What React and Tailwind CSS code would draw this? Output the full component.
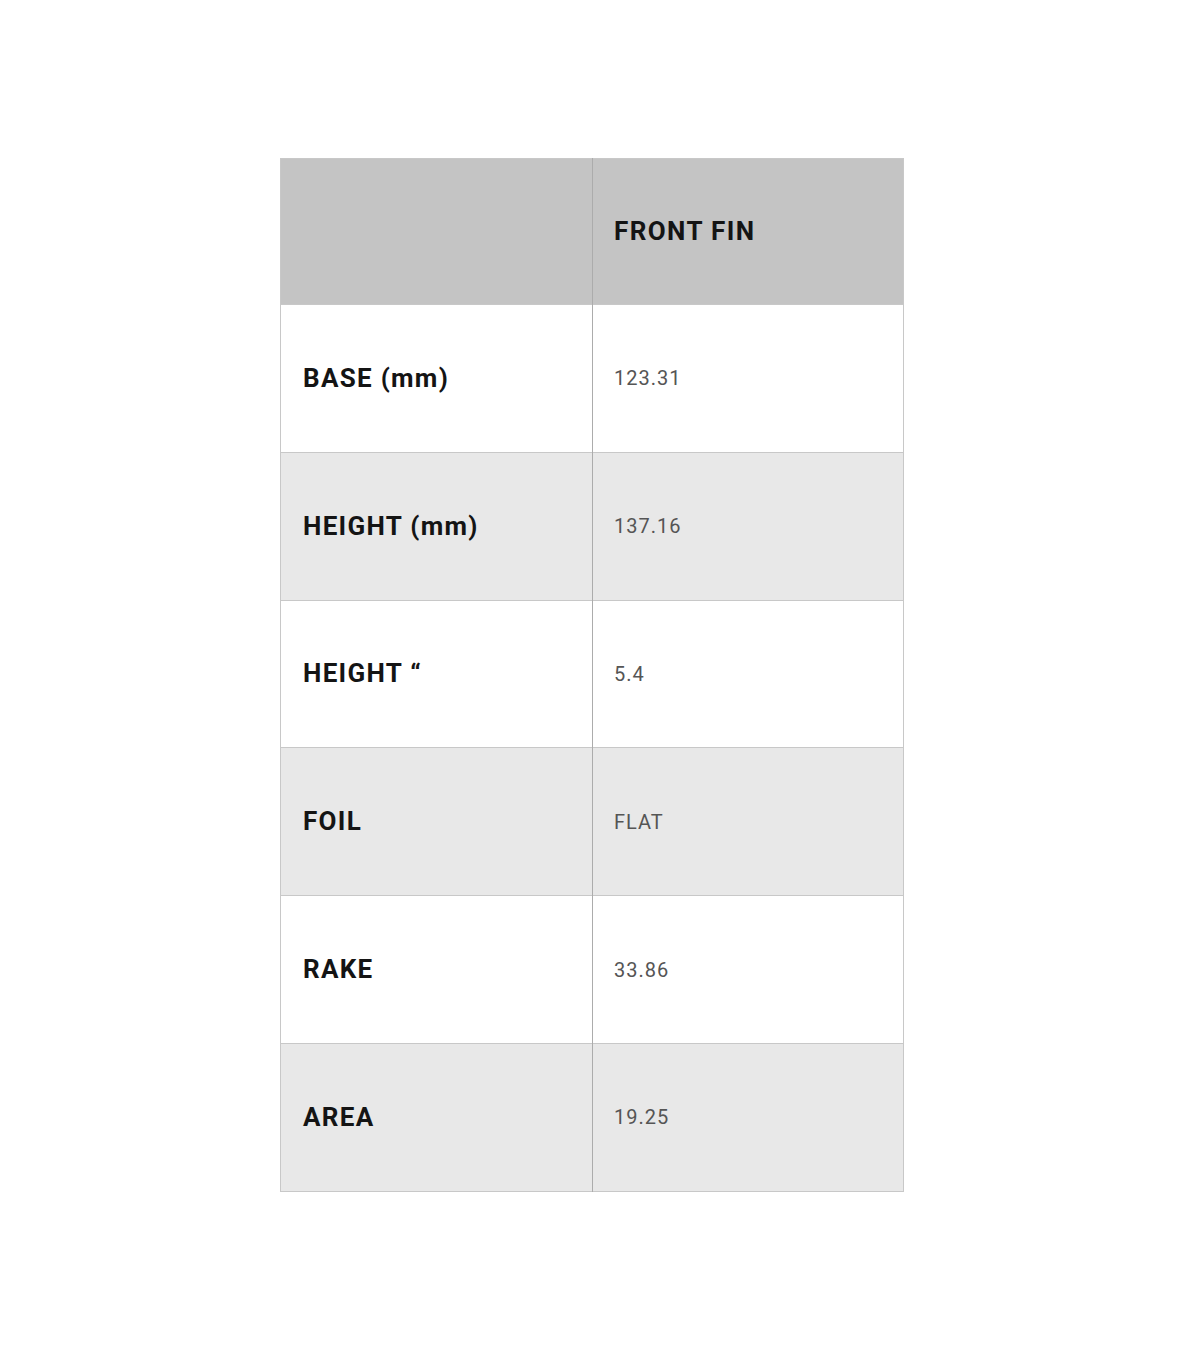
const rows = [
  ['BASE (mm)', '123.31'],
  ['HEIGHT (mm)', '137.16'],
  ['HEIGHT \u201C', '5.4'],
  ['FOIL', 'FLAT'],
  ['RAKE', '33.86'],
  ['AREA', '19.25'],
];

export default function App() {
  return (
    <div className="min-h-[1354px] bg-white pt-[158px]" style={{ fontFamily: 'Roboto, "Liberation Sans", sans-serif' }}>
      <table className="ml-[280px] w-[624px] border-collapse table-fixed border border-[#c8c8c8]">
        <thead>
          <tr className="h-[146px] bg-[#c4c4c4]">
            <th className="w-[312px] border-r border-[#acacac]"></th>
            <th className="pl-[21px] text-left text-[26px] font-bold tracking-[1.4px] text-[#141414]">FRONT FIN</th>
          </tr>
        </thead>
        <tbody>
          {rows.map(([label, value], i) => (
            <tr key={label} className={`h-[147.8px] border-t border-[#c8c8c8] ${i % 2 ? 'bg-[#e8e8e8]' : 'bg-white'}`}>
              <td className="pl-[22px] text-[26px] font-bold tracking-[1.3px] text-[#141414] border-r border-[#acacac]">{label}</td>
              <td className="pl-[21px] text-[20px] tracking-[1px] text-[#555555]">{value}</td>
            </tr>
          ))}
        </tbody>
      </table>
    </div>
  );
}
